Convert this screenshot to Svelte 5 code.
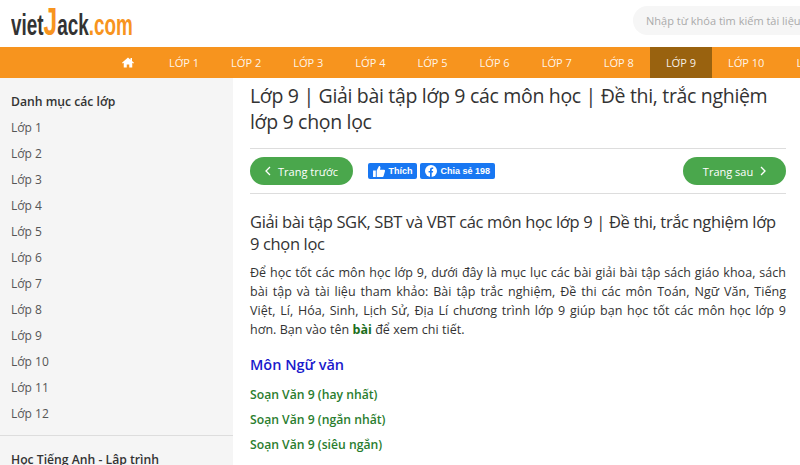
<script>
  const grades = [1, 2, 3, 4, 5, 6, 7, 8, 9, 10, 11, 12];
  const links = ['Soạn Văn 9 (hay nhất)', 'Soạn Văn 9 (ngắn nhất)', 'Soạn Văn 9 (siêu ngắn)'];
</script>

<div class="page">
  <header class="top">
    <a class="logo" href="#top"><span class="dark">viet</span><span class="jay">J</span><span class="dark">ack</span><span class="org">.com</span></a>
    <div class="search">Nhập từ khóa tìm kiếm tài liệu</div>
  </header>

  <nav class="nav">
    <a class="item home" href="#top" aria-label="Trang chủ">
      <svg width="12" height="11" viewBox="0 0 24 22"><path fill="#fff" d="M12 1 0 11.5l1.5 1.7L3.5 11.5V21h6v-6h5v6h6v-9.500l2 1.700 1.500-1.700L20 8V2h-3v3.400z"/></svg>
    </a>
    {#each grades.slice(0, 11) as g}
      <a class="item" class:active={g === 9} href="#top">LỚP {g}</a>
    {/each}
  </nav>

  <div class="body">
    <aside class="side">
      <h4>Danh mục các lớp</h4>
      <ul>
        {#each grades as g}
          <li>Lớp {g}</li>
        {/each}
      </ul>
      <hr />
      <h4>Học Tiếng Anh - Lập trình</h4>
    </aside>

    <main class="main">
      <h1>Lớp 9 | Giải bài tập lớp 9 các môn học | Đề thi, trắc nghiệm lớp 9 chọn lọc</h1>

      <div class="pager">
        <a class="btn" href="#top">
          <svg width="6" height="10" viewBox="0 0 6 10"><path d="M5 1 1 5l4 4" fill="none" stroke="#fff" stroke-width="1.300"/></svg>
          Trang trước
        </a>
        <div class="social">
          <span class="fb">
            <svg width="12" height="11" viewBox="0 0 13 12"><path fill="#fff" d="M0 5h3v7H0zM4 5l2.500-5c1.200 0 1.800 1 1.500 2.200L7.600 4H12c1 0 1.200 1 1 1.600l-1.500 5.400c-.2.600-.6 1-1.200 1H4z"/></svg>
            Thích
          </span>
          <span class="fb">
            <svg width="12" height="12" viewBox="0 0 12 12"><circle cx="6" cy="6" r="6" fill="#fff"/><path fill="#1877f2" d="M5 12V7.600H3.600V6H5V4.700C5 3.200 5.900 2.400 7.200 2.400c.5 0 1 .1 1 .1v1.400h-.6c-.7 0-.9.400-.9.900V6h1.500l-.3 1.600H6.700V12z"/></svg>
            Chia sẻ 198
          </span>
        </div>
        <a class="btn next" href="#top">
          Trang sau
          <svg width="6" height="10" viewBox="0 0 6 10"><path d="M1 1l4 4-4 4" fill="none" stroke="#fff" stroke-width="1.300"/></svg>
        </a>
      </div>

      <h2>Giải bài tập SGK, SBT và VBT các môn học lớp 9 | Đề thi, trắc nghiệm lớp 9 chọn lọc</h2>

      <p class="intro">Để học tốt các môn học lớp 9, dưới đây là mục lục các bài giải bài tập sách giáo khoa, sách bài tập và tài liệu tham khảo: Bài tập trắc nghiệm, Đề thi các môn Toán, Ngữ Văn, Tiếng Việt, Lí, Hóa, Sinh, Lịch Sử, Địa Lí chương trình lớp 9 giúp bạn học tốt các môn học lớp 9 hơn. Bạn vào tên <b>bài</b> để xem chi tiết.</p>

      <h3>Môn Ngữ văn</h3>

      {#each links as l}
        <a class="lesson" href="#top">{l}</a>
      {/each}
    </main>
  </div>
</div>

<style>
  :global(body) {
    margin: 0;
    overflow: hidden;
    background: #fff;
  }
  .page {
    width: 800px;
    height: 465px;
    overflow: hidden;
    font-family: "Open Sans", sans-serif;
    color: #333;
  }
  a {
    text-decoration: none;
  }
  .top {
    height: 47px;
    display: flex;
    align-items: center;
    justify-content: space-between;
    padding: 0 0 0 11px;
  }
  .logo {
    display: block;
    width: 122px;
    font-family: "Liberation Sans", sans-serif;
    font-weight: 700;
    font-size: 30px;
    line-height: 30px;
    white-space: nowrap;
    transform: scaleX(0.63);
    transform-origin: left center;
  }
  .dark {
    color: #333;
  }
  .org {
    color: #f7941e;
  }
  .jay {
    color: #f7941e;
    font-size: 39px;
    line-height: 30px;
  }
  .search {
    width: 154px;
    height: 29px;
    margin: -7px 0 0 0;
    padding: 0 0 0 13px;
    border-radius: 15px 0 0 15px;
    background: #f6f6f6;
    color: #aaa;
    font-size: 11px;
    line-height: 29px;
    white-space: nowrap;
    overflow: hidden;
  }
  .nav {
    height: 31px;
    background: #f7941e;
    display: flex;
    padding-left: 103px;
    white-space: nowrap;
  }
  .item {
    flex: none;
    padding: 0 16px;
    color: rgba(255, 255, 255, 0.92);
    font-size: 11px;
    line-height: 31px;
  }
  .home {
    width: 50px;
    padding: 0;
    box-sizing: border-box;
    display: flex;
    align-items: center;
    justify-content: center;
  }
  .active {
    background: #99620f;
  }
  .body {
    display: flex;
  }
  .side {
    width: 233px;
    height: 387px;
    flex: none;
    box-sizing: border-box;
    background: #f5f5f5;
    padding-top: 15px;
    font-size: 12px;
  }
  .side h4 {
    margin: 0;
    padding-left: 11px;
    font-size: 12.200px;
    font-weight: 600;
    line-height: 17px;
    color: #333;
  }
  .side ul {
    list-style: none;
    margin: 0;
    padding: 5px 0 0 11px;
  }
  .side li {
    height: 26px;
    line-height: 26px;
    color: #555;
  }
  .side hr {
    border: 0;
    border-top: 1px solid #ddd;
    margin: 8px 0 15px;
  }
  .main {
    flex: 1;
    padding: 0 14px 0 17px;
  }
  h1 {
    margin: 5px 0 0;
    font-size: 19.500px;
    line-height: 26px;
    font-weight: 400;
    letter-spacing: -0.320px;
    color: #333;
  }
  .pager {
    margin-top: 13px;
    height: 44px;
    border-top: 1px solid #ddd;
    border-bottom: 1px solid #ddd;
    display: flex;
    align-items: center;
  }
  .btn {
    height: 28px;
    width: 103px;
    border-radius: 14px;
    background: #4aa74c;
    color: #fff;
    font-size: 11px;
    display: flex;
    align-items: center;
    justify-content: center;
    gap: 7px;
  }
  .next {
    margin-left: auto;
  }
  .social {
    display: flex;
    gap: 3px;
    margin-left: 15px;
  }
  .fb {
    height: 16px;
    padding: 0 4.500px;
    border-radius: 2px;
    background: #1877f2;
    color: #fff;
    font-family: "Liberation Sans", sans-serif;
    font-size: 9px;
    font-weight: 700;
    display: flex;
    align-items: center;
    gap: 4px;
  }
  h2 {
    margin: 17px 0 0;
    font-size: 16.500px;
    line-height: 22px;
    font-weight: 400;
    letter-spacing: -0.350px;
    color: #333;
  }
  .intro {
    margin: 8px 0 0;
    font-size: 12.500px;
    line-height: 19px;
    letter-spacing: 0.040px;
    text-align: justify;
    color: #333;
  }
  .intro b {
    color: #1b6e1b;
  }
  h3 {
    margin: 16px 0 0;
    font-size: 14.500px;
    line-height: 20px;
    font-weight: 600;
    color: #1a1acc;
  }
  .lesson {
    display: block;
    margin-top: 7px;
    font-size: 12.200px;
    font-weight: 600;
    line-height: 18px;
    color: #2a7d2e;
  }
  h3 + .lesson {
    margin-top: 11px;
  }
</style>
